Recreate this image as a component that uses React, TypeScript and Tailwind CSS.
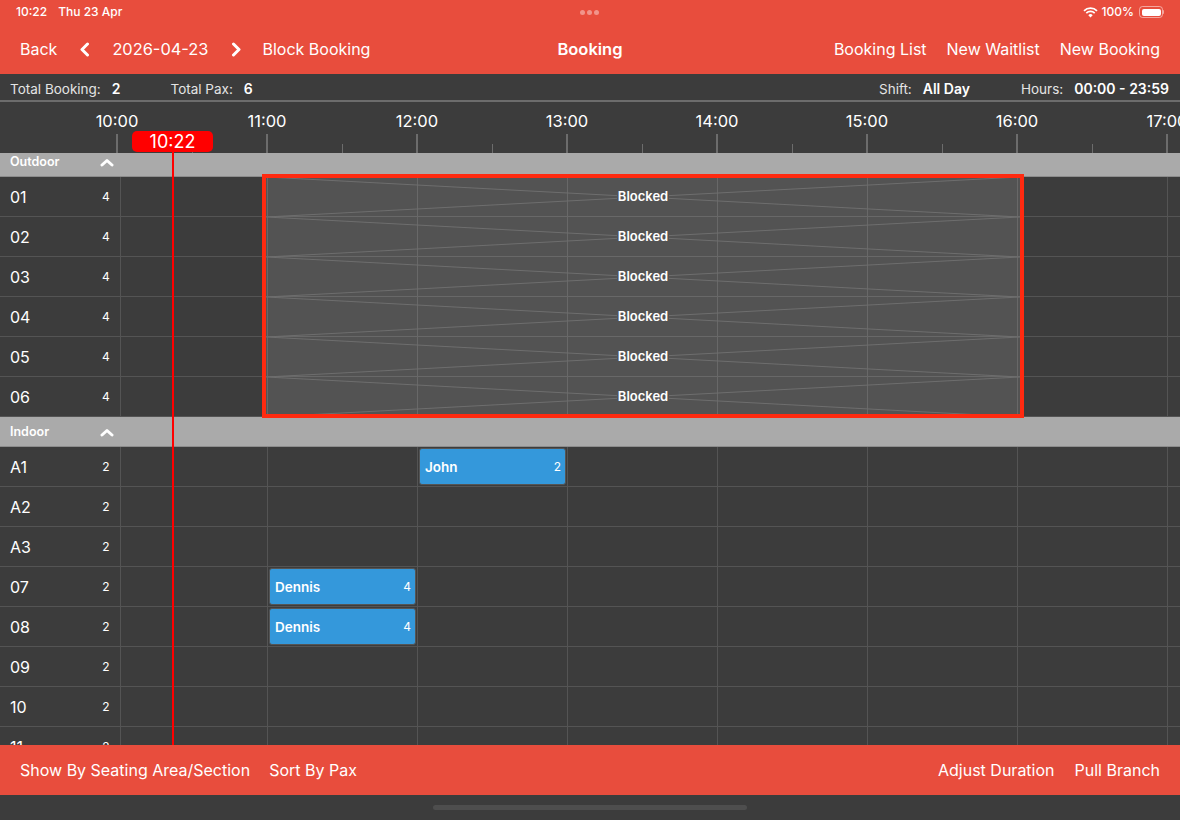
const hours = ["10:00", "11:00", "12:00", "13:00", "14:00", "15:00", "16:00", "17:00"];

type Booking = { name: string; pax: number; left: string };

function Chevron({ dir }: { dir: "left" | "right" | "up" }) {
  if (dir === "up") {
    return (
      <svg width="14" height="9" viewBox="0 0 14 9" className="block">
        <polyline points="2,7 7,2.5 12,7" fill="none" stroke="white" strokeWidth="3" strokeLinecap="round" strokeLinejoin="round" />
      </svg>
    );
  }
  return (
    <svg width="11" height="15" viewBox="0 0 11 15" className="block">
      <polyline
        points={dir === "left" ? "8.5,2 3,7.5 8.5,13" : "2.5,2 8,7.5 2.5,13"}
        fill="none"
        stroke="white"
        strokeWidth="3"
        strokeLinecap="round"
        strokeLinejoin="round"
      />
    </svg>
  );
}

function StatusBar() {
  return (
    <div className="relative flex h-[24px] items-center justify-between pl-[16px] pr-[16px] text-[12px] font-medium text-white">
      <div className="flex gap-[11px]">
        <span>10:22</span>
        <span>Thu 23 Apr</span>
      </div>
      {/* 가운데 점 3개 */}
      <div className="absolute left-[580px] top-[10px] flex gap-[2px]">
        <div className="h-[5px] w-[5px] rounded-full bg-white/40" />
        <div className="h-[5px] w-[5px] rounded-full bg-white/40" />
        <div className="h-[5px] w-[5px] rounded-full bg-white/40" />
      </div>
      <div className="flex items-center gap-[4px]">
        <svg width="15" height="11" viewBox="0 0 15 11" className="block">
          <path d="M1 3.8a9.2 9.2 0 0 1 13 0" fill="none" stroke="white" strokeWidth="1.7" />
          <path d="M3.3 6.1a6 6 0 0 1 8.4 0" fill="none" stroke="white" strokeWidth="1.7" />
          <path d="M5.3 8.2 7.5 10.6 9.7 8.2a3 3 0 0 0-4.4 0z" fill="white" />
        </svg>
        <span>100%</span>
        <div className="ml-[1px] flex items-center">
          <div className="h-[12px] w-[24px] rounded-[3.5px] border border-white/50 p-[1.5px]">
            <div className="h-full w-full rounded-[2px] bg-white" />
          </div>
          <div className="h-[4px] w-[1px] rounded-r bg-white/50" />
        </div>
      </div>
    </div>
  );
}

function NavBar() {
  return (
    <div className="grid h-[50px] grid-cols-[1fr_auto_1fr] items-center px-[20px] text-[16px] text-white">
      <div className="flex items-center pt-[1px]">
        <span>Back</span>
        <div className="ml-[22px]">
          <Chevron dir="left" />
        </div>
        <span className="ml-[22px] text-[16.4px]">2026-04-23</span>
        <div className="ml-[23px]">
          <Chevron dir="right" />
        </div>
        <span className="ml-[20px]">Block Booking</span>
      </div>
      <div className="pt-[1px] text-[16.5px] font-semibold">Booking</div>
      <div className="flex justify-end gap-[20px]">
        <span>Booking List</span>
        <span>New Waitlist</span>
        <span>New Booking</span>
      </div>
    </div>
  );
}

function Stat({ label, value }: { label: string; value: string }) {
  return (
    <div className="flex items-baseline gap-[11px]">
      <span className="text-[13.5px] text-[#e4e4e4]">{label}</span>
      <span className="text-[14px] font-semibold text-white">{value}</span>
    </div>
  );
}

function StatsBar() {
  return (
    <div className="flex h-[28px] items-center justify-between border-b-2 border-[#6c6c6c] pl-[10px] pr-[11px] pt-[3px]">
      <div className="flex gap-[50px]">
        <Stat label="Total Booking:" value="2" />
        <Stat label="Total Pax:" value="6" />
      </div>
      <div className="flex gap-[51px]">
        <Stat label="Shift:" value="All Day" />
        <Stat label="Hours:" value="00:00 - 23:59" />
      </div>
    </div>
  );
}

function Ruler() {
  return (
    <div className="flex h-[51px] shrink-0 pl-[42px]">
      {hours.map((h, i) => (
        <div key={h} className="flex w-[150px] shrink-0 flex-col items-center">
          <div className="mt-[7px] h-[25px] text-[16.5px] leading-[24px] text-white">{h}</div>
          <div className="flex flex-1 items-end justify-between self-stretch">
            {i === 0 ? <div className="h-[9px] w-px" /> : <div className="h-[9px] w-px bg-[#6c6c6c]" />}
            <div className="h-[19px] w-[2px] bg-[#6c6c6c]" />
            <div className="h-[9px] w-px" />
          </div>
        </div>
      ))}
    </div>
  );
}

function SectionHeader({ name, className }: { name: string; className: string }) {
  return (
    <div className={`flex items-center border-b border-[#8c8c8c] bg-[#aaaaaa] pl-[10px] text-[12.5px] font-semibold text-white ${className}`}>
      <span className="w-[90px]">{name}</span>
      <Chevron dir="up" />
    </div>
  );
}

function BookingBar({ booking }: { booking: Booking }) {
  return (
    <div className={`absolute top-[1px] flex h-[37px] w-[147px] items-center justify-between rounded-[3px] border border-[#555555] bg-[#3498db] pl-[5px] pr-[4px] text-white ${booking.left}`}>
      <span className="pt-[1px] text-[13.5px] font-semibold">{booking.name}</span>
      <span className="pt-[1px] text-[12px]">{booking.pax}</span>
    </div>
  );
}

function TableRow({ id, seats, booking }: { id: string; seats: number; booking?: Booking }) {
  return (
    <div className="relative flex h-[40px] shrink-0 border-b border-[#545454]">
      <div className="flex w-[121px] shrink-0 items-center border-r border-[#545454] pl-[10px] text-white">
        <span className="w-[91px] text-[16px]">{id}</span>
        <span className="w-[10px] pt-[1px] text-center text-[12px]">{seats}</span>
      </div>
      <div className="w-[146px] shrink-0" />
      {hours.map((h) => (
        <div key={h} className="w-[150px] shrink-0 border-l border-[#545454]" />
      ))}
      {booking && <BookingBar booking={booking} />}
    </div>
  );
}

function BlockedCell() {
  return (
    <div className="relative flex h-[40px] shrink-0 items-center justify-center">
      <svg className="absolute inset-0 h-full w-full" viewBox="0 0 100 100" preserveAspectRatio="none">
        <line x1="0" y1="0" x2="100" y2="100" stroke="#6e6e6e" strokeWidth="1" vectorEffect="non-scaling-stroke" />
        <line x1="0" y1="100" x2="100" y2="0" stroke="#6e6e6e" strokeWidth="1" vectorEffect="non-scaling-stroke" />
      </svg>
      <span className="relative bg-[#535353] px-[1px] text-[13px] font-semibold text-white">Blocked</span>
    </div>
  );
}

const outdoor = ["01", "02", "03", "04", "05", "06"];
const john: Booking = { name: "John", pax: 2, left: "left-[419px]" };
const dennis: Booking = { name: "Dennis", pax: 4, left: "left-[269px]" };

function Timeline() {
  return (
    <div className="relative min-h-0 flex-1 overflow-hidden">
      <Ruler />
      <div className="relative flex flex-col">
        <SectionHeader name="Outdoor" className="h-[24px] pb-[5px]" />
        {outdoor.map((id) => (
          <TableRow key={id} id={id} seats={4} />
        ))}
        <SectionHeader name="Indoor" className="h-[30px] pt-[1px]" />
        <TableRow id="A1" seats={2} booking={john} />
        <TableRow id="A2" seats={2} />
        <TableRow id="A3" seats={2} />
        <TableRow id="07" seats={2} booking={dennis} />
        <TableRow id="08" seats={2} booking={dennis} />
        <TableRow id="09" seats={2} />
        <TableRow id="10" seats={2} />
        <TableRow id="11" seats={2} />

        {/* 블록 영역 */}
        <div className="absolute left-[262px] top-[21px] h-[244px] w-[762px] overflow-hidden border-4 border-[#ff2a10] bg-white/[0.12]">
          <div className="-mt-px flex flex-col">
            {outdoor.map((id) => (
              <BlockedCell key={id} />
            ))}
          </div>
        </div>
      </div>

      {/* 현재 시간 */}
      <div className="absolute left-[172px] top-[50px] bottom-0 w-[1.5px] bg-[#ff0000]" />
      <div className="absolute left-[132px] top-[29px] flex h-[21px] w-[81px] items-center justify-center rounded-[5px] bg-[#ff0000] text-[18px] text-white">
        10:22
      </div>
    </div>
  );
}

function BottomBar() {
  return (
    <div className="flex h-[50px] shrink-0 items-center justify-between bg-[#e84d3d] px-[20px] text-[16px] text-white">
      <div className="flex gap-[19px]">
        <span>Show By Seating Area/Section</span>
        <span>Sort By Pax</span>
      </div>
      <div className="flex gap-[20px]">
        <span>Adjust Duration</span>
        <span>Pull Branch</span>
      </div>
    </div>
  );
}

export default function App() {
  return (
    <div className="flex h-[820px] w-[1180px] flex-col overflow-hidden bg-[#3c3c3c] [font-family:Inter,sans-serif]">
      <div className="shrink-0 bg-[#e84d3d]">
        <StatusBar />
        <NavBar />
      </div>
      <StatsBar />
      <Timeline />
      <BottomBar />
      <div className="flex h-[25px] shrink-0 items-center justify-center">
        <div className="h-[5px] w-[314px] rounded-full bg-[#4e4e4e]" />
      </div>
    </div>
  );
}
